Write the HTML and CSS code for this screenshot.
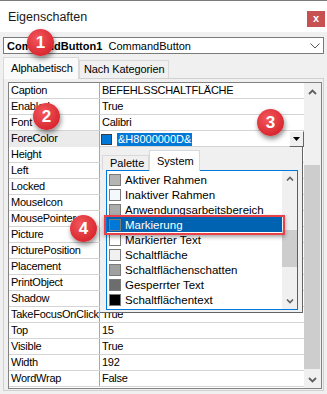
FILE: index.html
```html
<!DOCTYPE html>
<html lang="de">
<head>
<meta charset="UTF-8">
<link rel="stylesheet" href="styles.css">
<title>Eigenschaften</title>
</head>
<body>
<div class="window">
  <div class="titlebar">
    <span class="title">Eigenschaften</span>
    <span class="close">x</span>
  </div>

  <div class="objcombo">
    <span><b>CommandButton1</b>&nbsp; CommandButton</span>
    <svg class="chev" width="10" height="6" viewBox="0 0 10 6"><polyline points="0.5,0.5 5,5 9.5,0.5" fill="none" stroke="#555" stroke-width="1"/></svg>
  </div>

  <div class="tabs">
    <div class="tab active">Alphabetisch</div>
    <div class="tab">Nach Kategorien</div>
  </div>

  <div class="sheet">
    <div class="sheet-inner">
      <div class="grid">
        <div class="row"><div class="name">Caption</div><div class="value">BEFEHLSSCHALTFLÄCHE</div></div>
        <div class="row"><div class="name">Enabled</div><div class="value">True</div></div>
        <div class="row"><div class="name">Font</div><div class="value">Calibri</div></div>
        <div class="row current">
          <div class="name">ForeColor</div>
          <div class="value editor">
            <span class="swatch-sm"></span>
            <span class="sel">&amp;H8000000D&amp;</span>
            <span class="dropbtn"><svg width="7" height="4" viewBox="0 0 7 4"><polygon points="0,0 7,0 3.5,4" fill="#000"/></svg></span>
          </div>
        </div>
        <div class="row"><div class="name">Height</div><div class="value"></div></div>
        <div class="row"><div class="name">Left</div><div class="value"></div></div>
        <div class="row"><div class="name">Locked</div><div class="value"></div></div>
        <div class="row"><div class="name">MouseIcon</div><div class="value"></div></div>
        <div class="row"><div class="name">MousePointer</div><div class="value"></div></div>
        <div class="row"><div class="name">Picture</div><div class="value"></div></div>
        <div class="row"><div class="name">PicturePosition</div><div class="value"></div></div>
        <div class="row"><div class="name">Placement</div><div class="value"></div></div>
        <div class="row"><div class="name">PrintObject</div><div class="value"></div></div>
        <div class="row"><div class="name">Shadow</div><div class="value"></div></div>
        <div class="row"><div class="name">TakeFocusOnClick</div><div class="value">True</div></div>
        <div class="row"><div class="name">Top</div><div class="value">15</div></div>
        <div class="row"><div class="name">Visible</div><div class="value">True</div></div>
        <div class="row"><div class="name">Width</div><div class="value">192</div></div>
        <div class="row"><div class="name">WordWrap</div><div class="value">False</div></div>
      </div>
      <div class="vscroll">
        <div class="sbtn"><svg width="9" height="6" viewBox="0 0 9 6"><polyline points="1,5 4.5,1.5 8,5" fill="none" stroke="#606060" stroke-width="1.8"/></svg></div>
        <div class="track"><div class="thumb main-thumb"></div></div>
        <div class="sbtn"><svg width="9" height="6" viewBox="0 0 9 6"><polyline points="1,1 4.5,4.5 8,1" fill="none" stroke="#606060" stroke-width="1.8"/></svg></div>
      </div>
    </div>
  </div>

  <!-- Farbauswahl, aufgeklappt -->
  <div class="popup">
    <div class="ptabs">
      <div class="ptab">Palette</div>
      <div class="ptab active">System</div>
    </div>
    <div class="listbox">
      <div class="items">
        <div class="item"><span class="swatch" style="background:#b4b4b4"></span>Aktiver Rahmen</div>
        <div class="item"><span class="swatch" style="background:#f4f7fc"></span>Inaktiver Rahmen</div>
        <div class="item"><span class="swatch" style="background:#ababab"></span>Anwendungsarbeitsbereich</div>
        <div class="item selected"><span class="swatch" style="background:#0078d7"></span>Markierung</div>
        <div class="item"><span class="swatch" style="background:#ffffff"></span>Markierter Text</div>
        <div class="item"><span class="swatch" style="background:#f0f0f0"></span>Schaltfläche</div>
        <div class="item"><span class="swatch" style="background:#a0a0a0"></span>Schaltflächenschatten</div>
        <div class="item"><span class="swatch" style="background:#6d6d6d"></span>Gesperrter Text</div>
        <div class="item"><span class="swatch" style="background:#000000"></span>Schaltflächentext</div>
        <div class="item"><span class="swatch" style="background:#000000"></span></div>
      </div>
      <div class="lscroll">
        <div class="lbtn"><svg width="8" height="5" viewBox="0 0 8 5"><polyline points="1,4.5 4,1.5 7,4.5" fill="none" stroke="#606060" stroke-width="1.6"/></svg></div>
        <div class="ltrack"><div class="thumb list-thumb"></div></div>
        <div class="lbtn"><svg width="8" height="5" viewBox="0 0 8 5"><polyline points="1,0.5 4,3.5 7,0.5" fill="none" stroke="#606060" stroke-width="1.6"/></svg></div>
      </div>
    </div>
  </div>

  <div class="marker"></div>

  <div class="badge b1">1</div>
  <div class="badge b2">2</div>
  <div class="badge b3">3</div>
  <div class="badge b4">4</div>
</div>
</body>
</html>
```

FILE: styles.css
```css
* {
  box-sizing: border-box;
}
html, body {
  margin: 0;
  background: #f0f0f0;
}
.window {
  position: relative;
  width: 327px;
  height: 394px;
  overflow: hidden;
  background: #f0f0f0;
  font-family: "Liberation Sans", Arial, sans-serif;
  font-size: 11px;
  color: #000;
}

/* title bar */
.titlebar {
  height: 32px;
  background: #fff;
  border-top: 1px solid #7a7a7a;
  display: flex;
  align-items: center;
  justify-content: space-between;
  padding: 0 2px 0 8px;
}
.title {
  font-size: 12.5px;
  color: #1a1a1a;
}
.close {
  align-self: flex-start;
  margin-top: 10px;
  width: 18px;
  height: 16px;
  background: #c75050;
  color: #fff;
  font-weight: bold;
  font-size: 11px;
  line-height: 14px;
  text-align: center;
}

/* object combo */
.objcombo {
  margin: 5px 3px 0;
  height: 17px;
  border: 1px solid #7a7a7a;
  background: #fff;
  display: flex;
  align-items: center;
  justify-content: space-between;
  padding: 0 3px 0 3px;
  white-space: nowrap;
}
.objcombo b {
  font-weight: bold;
}

/* tabs */
.tabs {
  display: flex;
  align-items: flex-end;
  height: 21px;
  margin: 3px 0 0 3px;
}
.tab {
  height: 18px;
  padding: 0 4px;
  border: 1px solid #d9d9d9;
  border-bottom: none;
  background: #f0f0f0;
  line-height: 17px;
  letter-spacing: -0.1px;
}
.tab.active {
  position: relative;
  z-index: 2;
  height: 22px;
  margin-bottom: -1px;
  width: 76px;
  padding: 0 7px;
  background: #fafafa;
  line-height: 20px;
}

/* property sheet */
.sheet {
  margin: 0 3px;
  height: 313px;
  border: 1px solid #d0d0d0;
  padding: 3px 1px 1px 4px;
}
.sheet-inner {
  display: flex;
  height: 307px;
  border: 1px solid #828282;
  background: #fff;
}
.grid {
  flex: 1;
}
.row {
  display: grid;
  grid-template-columns: 91px 1fr;
  height: 16px;
  border-bottom: 1px solid #d4d4d4;
  line-height: 15px;
  white-space: nowrap;
  letter-spacing: -0.25px;
}
.name {
  padding-left: 2px;
  border-right: 1px solid #a8a8a8;
  overflow: hidden;
}
.value {
  padding-left: 2px;
  overflow: hidden;
}
.row.current .name {
  background: #ebebeb;
}
.editor {
  display: flex;
  align-items: center;
  padding-left: 1px;
  overflow: visible;
}
.swatch-sm {
  width: 11px;
  height: 11px;
  background: #0078d7;
  border: 1px solid #3c3c3c;
  margin-right: 5px;
}
.sel {
  background: #0078d7;
  color: #fff;
  padding: 0 1px;
  line-height: 13px;
  letter-spacing: 0;
}
.dropbtn {
  margin-left: auto;
  width: 15px;
  height: 16px;
  background: #f0f0f0;
  border-top: 1px solid #fff;
  border-left: 1px solid #fff;
  border-right: 1px solid #646464;
  border-bottom: 1px solid #646464;
  display: flex;
  align-items: center;
  justify-content: center;
  position: relative;
  z-index: 3;
}

/* scrollbars */
.vscroll {
  width: 17px;
  display: flex;
  flex-direction: column;
  background: #f0f0f0;
}
.sbtn {
  height: 17px;
  display: flex;
  align-items: center;
  justify-content: center;
}
.track {
  flex: 1;
}
.thumb {
  background: #cdcdcd;
}
.main-thumb {
  margin: 65px 1px 0 0;
  height: 204px;
}

/* colour popup */
.popup {
  position: absolute;
  left: 100px;
  top: 147px;
  width: 203px;
  height: 166px;
  background: #f0f0f0;
  border-right: 1px solid #646464;
  border-bottom: 1px solid #646464;
  z-index: 2;
}
.ptabs {
  display: flex;
  align-items: flex-end;
  height: 23px;
  padding: 2px 0 0 2px;
}
.ptab {
  height: 15px;
  width: 47px;
  border: 1px solid #d9d9d9;
  border-bottom: none;
  padding-left: 7px;
  line-height: 15px;
  font-size: 11px;
}
.ptab.active {
  height: 21px;
  width: 51px;
  background: #fff;
  line-height: 20px;
  margin-bottom: -1px;
  position: relative;
  z-index: 1;
}
.listbox {
  margin-left: 6px;
  width: 192px;
  height: 140px;
  border: 1px solid #0078d7;
  background: #fff;
  display: flex;
  overflow: hidden;
}
.items {
  flex: 1;
  padding-top: 1px;
}
.item {
  display: flex;
  align-items: center;
  height: 15px;
  padding-left: 2px;
  font-size: 11.5px;
  white-space: nowrap;
}
.item.selected {
  background: #0063b1;
  color: #fff;
}
.swatch {
  width: 12px;
  height: 12px;
  border: 1px solid #7a7a7a;
  margin-right: 4px;
  flex: none;
}
.lscroll {
  width: 15px;
  display: flex;
  flex-direction: column;
  background: #f0f0f0;
}
.lbtn {
  height: 15px;
  display: flex;
  align-items: center;
  justify-content: center;
}
.ltrack {
  flex: 1;
}
.list-thumb {
  margin-top: 44px;
  height: 37px;
}

/* annotations */
.marker {
  position: absolute;
  left: 104px;
  top: 215px;
  width: 181px;
  height: 20px;
  border: 2px solid #e8414a;
  box-shadow: 0 2px 4px rgba(0, 0, 0, 0.35);
  z-index: 4;
}
.badge {
  position: absolute;
  width: 27px;
  height: 27px;
  border-radius: 50%;
  background: radial-gradient(circle at 40% 35%, #f2575c, #d8262f 75%);
  box-shadow: 1px 3px 5px rgba(0, 0, 0, 0.45);
  color: #fff;
  font-weight: bold;
  font-size: 17px;
  line-height: 27px;
  text-align: center;
  z-index: 5;
}
.b1 { left: 27px; top: 29px; }
.b2 { left: 33px; top: 103px; }
.b3 { left: 257px; top: 109px; }
.b4 { left: 70px; top: 215px; }
```
